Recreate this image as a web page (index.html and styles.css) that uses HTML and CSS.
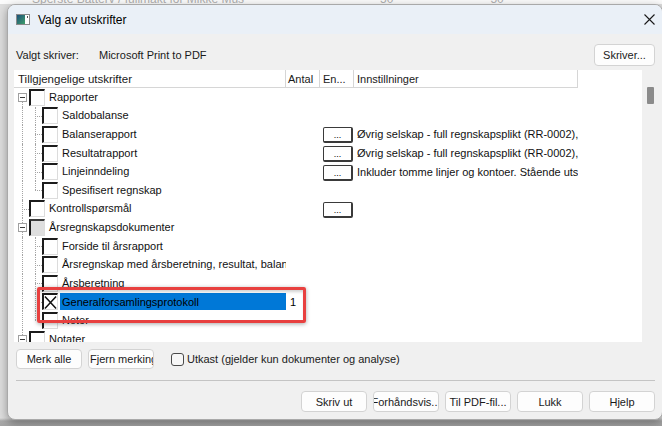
FILE: index.html
```html
<!DOCTYPE html>
<html lang="no">
<head>
<meta charset="utf-8">
<title>Valg av utskrifter</title>
<link rel="stylesheet" href="styles.css">
</head>
<body>
<div class="bgtop">
  <div class="bgline"><span class="bt1">Sperste Batterv / fullmakt for Mikke Mus</span><span class="bt2">50</span><span class="bt3">50</span></div>
</div>
<div class="win">
  <div class="title">
    <svg class="appicon" width="14" height="11" viewBox="0 0 14 11">
      <defs><linearGradient id="g1" x1="0" y1="0" x2="1" y2="1"><stop offset="0" stop-color="#1d4f7a"/><stop offset="1" stop-color="#3fa06a"/></linearGradient></defs>
      <rect x="0.5" y="0.5" width="13" height="10" fill="#fff" stroke="#8a8a8a"/>
      <rect x="1" y="1" width="8" height="9" fill="url(#g1)"/>
      <rect x="11" y="2" width="1" height="2" fill="#555"/>
    </svg>
    <span class="ttext">Valg av utskrifter</span>
    <svg class="close" width="11" height="11" viewBox="0 0 11 11"><path d="M0.5 0.5 L10.5 10.5 M10.5 0.5 L0.5 10.5" stroke="#1a1a1a" stroke-width="1.1" fill="none"/></svg>
  </div>
  <div class="content">
    <div class="printer">
      <span class="plabel">Valgt skriver:</span>
      <span class="pname">Microsoft Print to PDF</span>
      <div class="btn sk"><span>Skriver...</span></div>
    </div>
    <div class="listwrap">
      <div class="list">
        <div class="hdr">
          <div class="h-name">Tillgjengelige utskrifter</div>
          <div class="h-ant">Antal</div>
          <div class="h-en">En...</div>
          <div class="h-inn">Innstillninger</div>
        </div>

        <div class="row">
          <div class="name l0"><i class="v0 b"></i><span class="exp"></span><span class="cb"></span><span class="lbl">Rapporter</span></div>
          <div class="c-ant"></div><div class="c-en"></div><div class="c-inn"></div>
        </div>
        <div class="row">
          <div class="name l1"><i class="v0"></i><i class="v1"></i><i class="h1"></i><span class="cb"></span><span class="lbl">Saldobalanse</span></div>
          <div class="c-ant"></div><div class="c-en"></div><div class="c-inn"></div>
        </div>
        <div class="row">
          <div class="name l1"><i class="v0"></i><i class="v1"></i><i class="h1"></i><span class="cb"></span><span class="lbl">Balanserapport</span></div>
          <div class="c-ant"></div><div class="c-en"><span class="dots">...</span></div><div class="c-inn">Øvrig selskap - full regnskapsplikt (RR-0002), Stående utskrift</div>
        </div>
        <div class="row">
          <div class="name l1"><i class="v0"></i><i class="v1"></i><i class="h1"></i><span class="cb"></span><span class="lbl">Resultatrapport</span></div>
          <div class="c-ant"></div><div class="c-en"><span class="dots">...</span></div><div class="c-inn">Øvrig selskap - full regnskapsplikt (RR-0002), Stående utskrift</div>
        </div>
        <div class="row">
          <div class="name l1"><i class="v0"></i><i class="v1"></i><i class="h1"></i><span class="cb"></span><span class="lbl">Linjeinndeling</span></div>
          <div class="c-ant"></div><div class="c-en"><span class="dots">...</span></div><div class="c-inn">Inkluder tomme linjer og kontoer. Stående utskrift</div>
        </div>
        <div class="row">
          <div class="name l1"><i class="v0"></i><i class="v1 t"></i><i class="h1"></i><span class="cb"></span><span class="lbl">Spesifisert regnskap</span></div>
          <div class="c-ant"></div><div class="c-en"></div><div class="c-inn"></div>
        </div>
        <div class="row">
          <div class="name l0 noexp"><i class="v0"></i><i class="h0"></i><span class="cb"></span><span class="lbl">Kontrollspørsmål</span></div>
          <div class="c-ant"></div><div class="c-en"><span class="dots">...</span></div><div class="c-inn"></div>
        </div>
        <div class="row">
          <div class="name l0"><i class="v0"></i><span class="exp"></span><span class="cb part"></span><span class="lbl">Årsregnskapsdokumenter</span></div>
          <div class="c-ant"></div><div class="c-en"></div><div class="c-inn"></div>
        </div>
        <div class="row">
          <div class="name l1"><i class="v0"></i><i class="v1"></i><i class="h1"></i><span class="cb"></span><span class="lbl">Forside til årsrapport</span></div>
          <div class="c-ant"></div><div class="c-en"></div><div class="c-inn"></div>
        </div>
        <div class="row">
          <div class="name l1"><i class="v0"></i><i class="v1"></i><i class="h1"></i><span class="cb"></span><span class="lbl">Årsregnskap med årsberetning, resultat, balanse og noter</span></div>
          <div class="c-ant"></div><div class="c-en"></div><div class="c-inn"></div>
        </div>
        <div class="row">
          <div class="name l1"><i class="v0"></i><i class="v1"></i><i class="h1"></i><span class="cb"></span><span class="lbl">Årsberetning</span></div>
          <div class="c-ant"></div><div class="c-en"></div><div class="c-inn"></div>
        </div>
        <div class="row">
          <div class="name l1"><i class="v0"></i><i class="v1"></i><i class="h1"></i><span class="cb"><svg width="14" height="15" viewBox="0 0 14 15"><path d="M1 1 L13 14 M13 1 L1 14" stroke="#111" stroke-width="1.6" fill="none"/></svg></span><span class="lbl sel">Generalforsamlingsprotokoll</span></div>
          <div class="c-ant">1</div><div class="c-en"></div><div class="c-inn"></div>
        </div>
        <div class="row">
          <div class="name l1"><i class="v0"></i><i class="v1 t"></i><i class="h1"></i><span class="cb"></span><span class="lbl">Noter</span></div>
          <div class="c-ant"></div><div class="c-en"></div><div class="c-inn"></div>
        </div>
        <div class="row">
          <div class="name l0"><i class="v0 t"></i><span class="exp"></span><span class="cb"></span><span class="lbl">Notater</span></div>
          <div class="c-ant"></div><div class="c-en"></div><div class="c-inn"></div>
        </div>
      </div>
      <div class="vscroll"><div class="thumb"></div></div>
    </div>
    <div class="actions">
      <div class="btn a1"><span>Merk alle</span></div>
      <div class="btn a2 left"><span>Fjern merking</span></div>
      <span class="chk"></span>
      <span class="chklbl">Utkast (gjelder kun dokumenter og analyse)</span>
    </div>
    <div class="sep"></div>
    <div class="footer">
      <div class="btn"><span>Skriv ut</span></div>
      <div class="btn"><span>Forhåndsvis...</span></div>
      <div class="btn"><span>Til PDF-fil...</span></div>
      <div class="btn"><span>Lukk</span></div>
      <div class="btn"><span>Hjelp</span></div>
    </div>
  </div>
</div>
<div class="annot"></div>
</body>
</html>
```

FILE: styles.css
```css
html, body {
  margin: 0;
  padding: 0;
}
body {
  width: 662px;
  height: 426px;
  overflow: hidden;
  position: relative;
  font-family: "Liberation Sans", Arial, sans-serif;
  font-size: 11px;
  color: #000;
  background: linear-gradient(to bottom, #fbfbfb 0, #fbfbfb 4px, #dedede 4px, #dedede 418px, #a9a9a9 421px, #a4a4a4 426px);
}

.bgtop {
  height: 4px;
  overflow: hidden;
}
.bgline {
  margin-top: -8px;
  display: flex;
  font-size: 12px;
  color: #a8a8a8;
  white-space: nowrap;
}
.bt1 { margin-left: 32px; }
.bt2 { margin-left: 136px; }
.bt3 { margin-left: 97px; }

.win {
  margin-left: 7px;
  width: 656px;
  height: 416px;
  box-sizing: border-box;
  border: 1px solid #a9a9a9;
  border-radius: 8px;
  background: #f0f0f0;
  box-shadow: 0 3px 10px rgba(0, 0, 0, 0.35);
  overflow: hidden;
  display: flex;
  flex-direction: column;
}

.title {
  height: 29px;
  flex: none;
  background: #eaf0f7;
  display: flex;
  align-items: center;
  padding: 0 7px 0 8px;
}
.appicon { display: block; flex: none; }
.ttext {
  margin-left: 8px;
  font-size: 12px;
  color: #000;
}
.close { margin-left: auto; display: block; }

.content {
  padding: 10px 7px 0 8px;
  display: flex;
  flex-direction: column;
}

.printer {
  height: 22px;
  display: flex;
  align-items: center;
}
.plabel { width: 83px; color: #1a1a1a; }
.pname { color: #1a1a1a; }

.btn {
  box-sizing: border-box;
  width: 66px;
  height: 21px;
  border: 1px solid #d3d3d3;
  border-radius: 4px;
  background: #fdfdfd;
  display: flex;
  align-items: center;
  justify-content: center;
  overflow: hidden;
  white-space: nowrap;
  color: #1a1a1a;
  flex: none;
}
.btn.left { justify-content: flex-start; padding-left: 1px; }
.btn.sk { margin-left: auto; width: 61px; height: 22px; }

.listwrap {
  margin: 4px -7px 0 -2px;
  height: 272px;
  display: flex;
}
.list {
  width: 628px;
  background: #fff;
  overflow: hidden;
  display: flex;
  flex-direction: column;
}
.vscroll {
  flex: 1;
  background: #f0f0f0;
}
.thumb {
  margin: 17px 0 0 5px;
  width: 7px;
  height: 17px;
  background: #8b8b8b;
  border-radius: 1px;
}

.hdr {
  display: grid;
  grid-template-columns: 272px 34px 34px 224px;
  height: 18px;
  flex: none;
}
.hdr > div {
  box-sizing: border-box;
  border-right: 1px solid #d6d6d6;
  border-bottom: 1px solid #d6d6d6;
  display: flex;
  align-items: center;
  white-space: nowrap;
  overflow: hidden;
  color: #1a1a1a;
}
.h-name { padding-left: 4px; font-size: 11.5px; }
.h-ant { padding-left: 2px; }
.h-en { padding-left: 3px; }
.h-inn { padding-left: 3px; }

.row {
  display: grid;
  grid-template-columns: 272px 34px 34px 224px;
  height: 18.6px;
  flex: none;
}
.name {
  position: relative;
  display: flex;
  align-items: center;
  white-space: nowrap;
  overflow: hidden;
}
.name.l0 { padding-left: 4px; }
.name.l0.noexp { padding-left: 15px; }
.name.l1 { padding-left: 28px; }

.v0, .v1, .h0, .h1 { position: absolute; }
.v0 { left: 8px; top: 0; bottom: 0; border-left: 1px dotted #a4a4a4; }
.v1 { left: 21px; top: 0; bottom: 0; border-left: 1px dotted #a4a4a4; }
.v0.t, .v1.t { bottom: 50%; }
.v0.b { top: 50%; }
.h0 { left: 8px; width: 7px; top: 50%; border-top: 1px dotted #a4a4a4; }
.h1 { left: 21px; width: 7px; top: 50%; border-top: 1px dotted #a4a4a4; }

.exp {
  position: relative;
  box-sizing: border-box;
  width: 9px;
  height: 9px;
  margin-right: 2px;
  border: 1px solid #a0a0a0;
  background: #fff;
  display: flex;
  align-items: center;
  justify-content: center;
  flex: none;
}
.exp::after {
  content: "";
  width: 5px;
  height: 1px;
  background: #3a3a3a;
}

.cb {
  position: relative;
  box-sizing: border-box;
  width: 16px;
  height: 17px;
  border-left: 2px solid #1c1c1c;
  border-top: 2px solid #1c1c1c;
  border-right: 1px solid #dcdcdc;
  border-bottom: 1px solid #dcdcdc;
  background: #fff;
  flex: none;
  display: flex;
}
.cb svg { display: block; }
.cb.part { background: #dedede; border-top-color: #3a3a3a; }

.lbl {
  position: relative;
  margin-left: 4px;
  padding-bottom: 1px;
  color: #111;
}
.lbl.sel {
  flex: 1;
  margin-left: 2px;
  padding: 0 0 0 2px;
  height: 17px;
  background: #0078d7;
  display: flex;
  align-items: center;
  color: #000;
}

.c-ant {
  display: flex;
  align-items: center;
  padding-left: 4px;
}
.c-en {
  display: flex;
  align-items: center;
  padding-left: 3px;
}
.c-inn {
  display: flex;
  align-items: center;
  padding-left: 3px;
  white-space: nowrap;
  overflow: hidden;
  color: #111;
}
.dots {
  box-sizing: border-box;
  width: 30px;
  height: 16px;
  margin-top: 2px;
  border: 1px solid #3a3a3a;
  border-right-width: 2px;
  border-bottom-width: 2px;
  border-radius: 2px;
  background: #fff;
  display: flex;
  align-items: flex-end;
  justify-content: center;
  font-size: 9px;
  line-height: 9px;
  padding-bottom: 1px;
}

.actions {
  margin-top: 7px;
  height: 20px;
  display: flex;
  align-items: center;
}
.actions .btn { height: 20px; }
.a2 { margin-left: 6px; }
.chk {
  box-sizing: border-box;
  margin-left: 17px;
  width: 13px;
  height: 13px;
  border: 1px solid #4a4a4a;
  border-radius: 3px;
  background: #f7f7f7;
  flex: none;
}
.chklbl { margin-left: 3px; color: #1a1a1a; }

.sep {
  margin-top: 11px;
  height: 1px;
  background: #c4c4c4;
}

.footer {
  margin-top: 10px;
  height: 21px;
  display: flex;
  justify-content: flex-end;
  gap: 6px;
}

.annot {
  position: absolute;
  left: 37px;
  top: 287px;
  width: 269px;
  height: 36px;
  box-sizing: border-box;
  border: 3px solid #e8403f;
  border-radius: 2px;
  box-shadow: 0 1px 4px rgba(0, 0, 0, 0.35), inset 0 3px 3px -1px rgba(0, 0, 0, 0.18);
}
```
